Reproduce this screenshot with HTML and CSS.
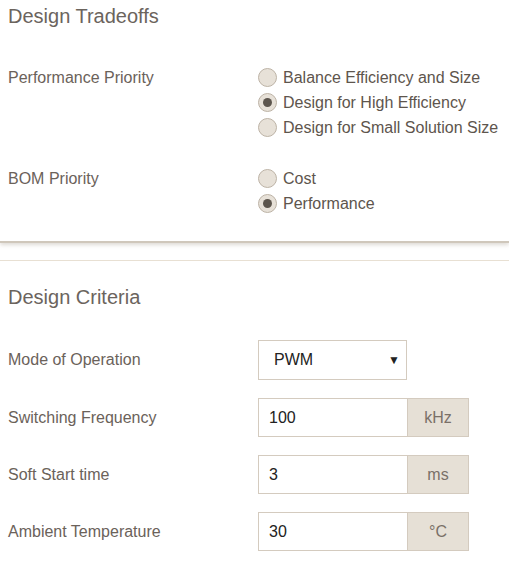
FILE: index.html
```html
<!DOCTYPE html>
<html>
<head>
<meta charset="utf-8">
<link rel="stylesheet" href="styles.css">
</head>
<body>
<div class="section first">
  <h2 class="title">Design Tradeoffs</h2>
  <div class="row radio-row">
    <div class="label">Performance Priority</div>
    <div class="options">
      <div class="opt"><span class="radio"></span>Balance Efficiency and Size</div>
      <div class="opt"><span class="radio checked"></span>Design for High Efficiency</div>
      <div class="opt"><span class="radio"></span>Design for Small Solution Size</div>
    </div>
  </div>
  <div class="row radio-row bom">
    <div class="label">BOM Priority</div>
    <div class="options">
      <div class="opt"><span class="radio"></span>Cost</div>
      <div class="opt"><span class="radio checked"></span>Performance</div>
    </div>
  </div>
</div>
<div class="section second">
  <h2 class="title">Design Criteria</h2>
  <div class="row field-row">
    <div class="label">Mode of Operation</div>
    <div class="select"><span>PWM</span><span class="arrow">&#9660;</span></div>
  </div>
  <div class="row field-row">
    <div class="label">Switching Frequency</div>
    <div class="group"><div class="input">100</div><div class="addon">kHz</div></div>
  </div>
  <div class="row field-row">
    <div class="label">Soft Start time</div>
    <div class="group"><div class="input">3</div><div class="addon">ms</div></div>
  </div>
  <div class="row field-row">
    <div class="label">Ambient Temperature</div>
    <div class="group"><div class="input">30</div><div class="addon">°C</div></div>
  </div>
</div>
</body>
</html>
```

FILE: styles.css
```css
html, body {
  margin: 0;
  padding: 0;
  background: #ffffff;
  font-family: "Liberation Sans", Arial, sans-serif;
  color: #6b625a;
}
.section {
  padding: 0 8px;
}
.first {
  padding-bottom: 25px;
  border-bottom: 2px solid #cfc7bb;
  box-shadow: 0 2px 4px rgba(160, 150, 135, 0.35);
  height: 216px;
}
.second {
  margin-top: 17px;
  border-top: 1px solid #e8e0d3;
}
.title {
  margin: 0;
  font-size: 20px;
  font-weight: normal;
  line-height: 32px;
  color: #6b645d;
}
.second .title {
  margin-top: 20px;
}
.row {
  display: flex;
}
.label {
  width: 250px;
  font-size: 16px;
  flex: none;
}
.radio-row {
  margin-top: 33px;
}
.radio-row .label {
  line-height: 25px;
}
.radio-row.bom {
  margin-top: 26px;
}
.options {
  display: flex;
  flex-direction: column;
}
.opt {
  display: flex;
  align-items: center;
  height: 25px;
  font-size: 16px;
  color: #5e554d;
}
.radio {
  box-sizing: border-box;
  width: 19px;
  height: 19px;
  border-radius: 50%;
  border: 1px solid #bdb3a6;
  background: #e7e1d8;
  margin-right: 6px;
  display: flex;
  align-items: center;
  justify-content: center;
}
.radio.checked::after {
  content: "";
  width: 9px;
  height: 9px;
  border-radius: 50%;
  background: #5c554d;
}
.field-row {
  align-items: center;
  margin-top: 18px;
}
.second .field-row:first-of-type {
  margin-top: 27px;
}
.select {
  box-sizing: border-box;
  width: 149px;
  height: 40px;
  border: 1px solid #d4cbbf;
  display: flex;
  align-items: center;
  justify-content: space-between;
  padding: 0 6px 0 15px;
  font-size: 16px;
  color: #222;
}
.arrow {
  font-size: 12px;
  color: #222;
}
.group {
  display: flex;
  height: 39px;
}
.input {
  box-sizing: border-box;
  width: 149px;
  height: 39px;
  border: 1px solid #d4cbbf;
  border-right: none;
  padding: 0 10px;
  display: flex;
  align-items: center;
  font-size: 16px;
  color: #222;
}
.addon {
  box-sizing: border-box;
  width: 62px;
  height: 39px;
  background: #e6e0d6;
  border: 1px solid #d4cbbf;
  display: flex;
  align-items: center;
  justify-content: center;
  font-size: 16px;
  color: #7a7068;
}
```
